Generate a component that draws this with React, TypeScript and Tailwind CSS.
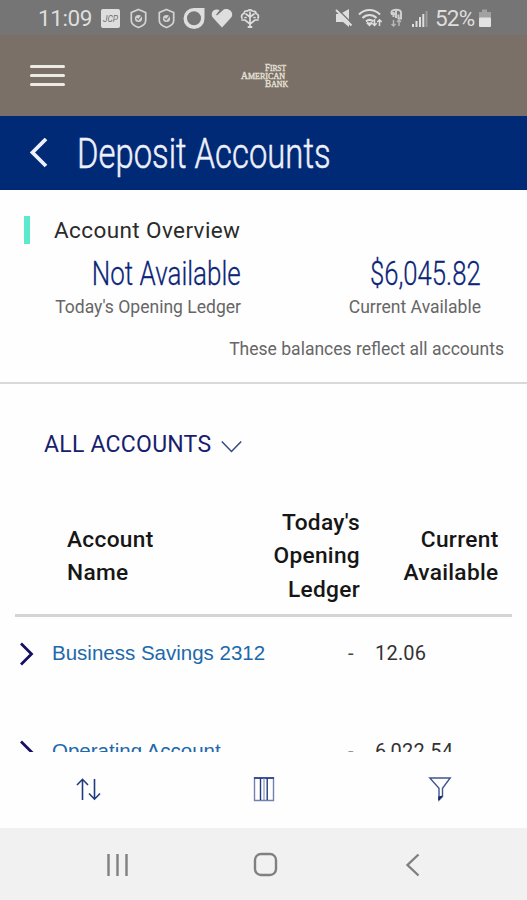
import React from "react";

function StatusBar() {
  return (
    <div className="flex h-[35px] shrink-0 items-center bg-[#757575] pl-[38px] text-[#dedede]">
      <span className="w-[62px] whitespace-nowrap pt-[2px] text-[22.5px] leading-[35px] tracking-[-0.4px]">11:09</span>
      <svg className="h-[35px] w-[170px]" viewBox="100 0 170 35" fill="none">
        <rect x="101" y="9" width="19" height="19" rx="2" fill="#dedede" />
        <text x="103" y="21.500" fontSize="9" fontStyle="italic" fill="#6e6e6e" textLength="15" lengthAdjust="spacingAndGlyphs">JCP</text>
        {[138.500, 166.500].map((x) => (
          <g key={x} transform={`translate(${x} 18.500)`} stroke="#d4d4d4">
            <path d="M0-9 7.200-6V2C7.200 5.500 3 8 0 9-3 8-7.200 5.500-7.200 2V-6Z" strokeWidth="1.700" />
            <circle r="3.600" fill="#d4d4d4" stroke="none" />
            <path d="m-2-.3 1.700 1.700 3.200-3.700" stroke="#757575" strokeWidth="1.200" />
          </g>
        ))}
        <path fillRule="evenodd" d="M194 8h10.500v10.500a10.500 10.500 0 1 1-10.500-10.500Zm0 3.200a7 7 0 1 0 0 14 7 7 0 0 0 0-14Z" fill="#dedede" />
        <path d="m222 27.500-9-9.700c-3-3.500-.5-8.300 3.500-8.300 1.500 0 2.300.4 3 1l-3.300 4 .7.900 5.500-4.700c4-3.700 9.800-.3 9.800 3.800 0 1.600-.8 2.800-1.700 3.800Z" fill="#dedede" />
        <g stroke="#dedede" strokeLinecap="round">
          <path d="M250 27V12M250 24l-5-4h-3M250 24l5-4h3M250 17l-4-3M250 17l4-3" strokeWidth="1.700" />
          <path d="M242 18c-1-2 0-4 2-4.500 0-2 2-3 3.500-2.500 1.500-1.500 4-1.500 5 0 2 0 3.500 1 3.500 2.500 2 .5 3 2.500 2 4.500M245 17.500h1M254 17.500h1" strokeWidth="1.700" />
          <path d="M248.500 27h3" strokeWidth="2" />
        </g>
      </svg>
      <svg className="ml-[64px] h-[35px] w-[98px]" viewBox="334 0 98 35" fill="none">
        <path d="M336 14h4l9-5v18l-6-5h-7Z" fill="#dedede" />
        <path d="m337 8.500 16 16" stroke="#757575" strokeWidth="1.500" />
        <path d="m336 10 15.500 15.500" stroke="#dedede" strokeWidth="2" />
        <g stroke="#dedede" strokeWidth="2.100">
          <path d="M359 14.500c6-6 15-6 21 0M362.500 18c4-4 10-4 14 0M366 21.500c2-2 5-2 7.500 0" />
          <path d="m367 22.500 2.500 2.500 2.500-2.500" fill="#dedede" />
          <path d="M374.500 19v6M372.300 23.300l2.200 2.200 2.200-2.200M379.500 26v-6M377.300 22l2.200-2.200 2.200 2.200" strokeWidth="1.500" />
        </g>
        <path d="M391.500 14v-2c0-3 9.500-3 9.500.5v6h-2.500v-4M391 14h6M393.500 12v5M396 10v8" stroke="#cfcfcf" strokeWidth="2" />
        <path d="M393.500 20v6M391.500 24l2 2 2-2M399 26v-6M397 22l2-2 2 2" stroke="#b5b5b5" strokeWidth="1.500" />
        <g fill="#dedede">
          <rect x="412" y="24" width="2" height="3" />
          <rect x="415.500" y="21" width="2" height="6" />
          <rect x="419" y="17" width="2" height="10" />
          <rect x="422.300" y="14" width="2" height="13" />
          <rect x="425.500" y="11" width="2" height="16" fill="#999" />
        </g>
      </svg>
      <span className="ml-[3px] w-[43px] whitespace-nowrap pt-[2px] text-[22.5px] leading-[35px] tracking-[-0.8px]">52%</span>
      <svg className="h-[35px] w-[14px]" viewBox="478 0 14 35">
        <path d="M479 12h3V9.500h5V12h4v6h-12Z" fill="#a2a2a2" />
        <rect x="479" y="17.500" width="12" height="9.500" rx="1" fill="#e2e2e2" />
      </svg>
    </div>
  );
}

function BrandHeader() {
  return (
    <header className="flex h-[80.5px] shrink-0 items-center bg-[#7a7067] pl-[30px]">
      <button aria-label="Menu" className="flex w-[35px] flex-col gap-[5.5px]">
        <span className="h-[3.5px] rounded-sm bg-[#eeebe4]" />
        <span className="h-[3.5px] rounded-sm bg-[#eeebe4]" />
        <span className="h-[3.5px] rounded-sm bg-[#eeebe4]" />
      </button>
      <svg className="ml-[175px] h-[28px] w-[50px]" viewBox="240 60 50 28" fill="#e6e1d8" stroke="#e6e1d8" strokeWidth=".35" fontFamily="Liberation Serif, serif">
        <text x="265" y="70" fontSize="9.500" textLength="21" lengthAdjust="spacingAndGlyphs">F<tspan fontSize="8">IRST</tspan></text>
        <text x="241" y="78" fontSize="9.500" textLength="44" lengthAdjust="spacingAndGlyphs">A<tspan fontSize="8">MERICAN</tspan></text>
        <text x="265" y="86" fontSize="9.500" textLength="23" lengthAdjust="spacingAndGlyphs">B<tspan fontSize="8">ANK</tspan></text>
      </svg>
    </header>
  );
}

function TitleBar() {
  return (
    <div className="flex h-[74.5px] shrink-0 items-center bg-[#002a76] pl-[29px] text-[#eef0fa]">
      <svg className="h-[30px] w-[20px]" viewBox="0 0 20 30" fill="none" stroke="currentColor" strokeWidth="3.800">
        <path d="M17 1 3.500 14.500 17 28" />
      </svg>
      <h1 className="ml-[28px] origin-left scale-x-[0.763] whitespace-nowrap text-[43px] leading-[74px] font-light [-webkit-text-stroke:0.5px]">Deposit Accounts</h1>
    </div>
  );
}

function Overview() {
  return (
    <section className="h-[194px] shrink-0 border-b-2 border-[#d9d9d9] pt-[26px]">
      <div className="flex h-[28px] items-center pl-[24px]">
        <span className="h-[28px] w-[6px] bg-[#5beacb]" />
        <h2 className="ml-[24px] whitespace-nowrap text-[22.5px] leading-[28px] tracking-[0.4px] text-[#2b2b2b]">Account Overview</h2>
      </div>
      <div className="flex h-[74px]">
        <div className="flex w-[241px] flex-col items-end">
          <span className="mt-[8px] h-[43px] origin-right scale-x-[0.765] whitespace-nowrap text-[34px] leading-[42px] font-light text-[#0b2478] [-webkit-text-stroke:0.3px]">Not Available</span>
          <span className="whitespace-nowrap text-[17.55px] leading-[26px] text-[#666]">Today's Opening Ledger</span>
        </div>
        <div className="flex w-[240px] flex-col items-end">
          <span className="mt-[8px] h-[43px] origin-right scale-x-[0.755] whitespace-nowrap text-[34px] leading-[42px] font-light text-[#0b2478] [-webkit-text-stroke:0.3px]">$6,045.82</span>
          <span className="whitespace-nowrap text-[17.55px] leading-[26px] text-[#666]">Current Available</span>
        </div>
      </div>
      <p className="mt-[18px] pr-[23px] text-right text-[17.55px] leading-[26px] text-[#666]">These balances reflect all accounts</p>
    </section>
  );
}

function AccountRow({ name, value }: { name: string; value: string }) {
  return (
    <div className="flex h-[98px] shrink-0 items-start">
      <svg className="ml-[19px] mt-[8px] h-[24px] w-[16px]" viewBox="0 0 16 24" fill="none" stroke="#17105e" strokeWidth="2.800">
        <path d="M2 1.500 12.500 12 2 22.500" />
      </svg>
      <span className="ml-[17px] w-[296px] whitespace-nowrap font-['Liberation_Sans',sans-serif] text-[20.5px] leading-[38px] text-[#2168ab]">{name}</span>
      <span className="w-[27px] text-[20px] leading-[38px] text-[#444]">-</span>
      <span className="text-[20px] leading-[38px] tracking-[0.2px] text-[#333]">{value}</span>
    </div>
  );
}

export default function App() {
  return (
    <div className="flex h-[900px] w-[527px] flex-col overflow-hidden bg-[#fefefe] font-[Roboto,sans-serif]">
      <StatusBar />
      <BrandHeader />
      <TitleBar />
      <Overview />
      <div className="flex h-[120px] shrink-0 items-center pl-[44px] text-[#17206e]">
        <span className="w-[177px] whitespace-nowrap pt-[2px] text-[23px] leading-[30px] tracking-[0.25px]">ALL ACCOUNTS</span>
        <svg className="mt-[5px] h-[14px] w-[21px]" viewBox="0 0 21 14" fill="none" stroke="#344685" strokeWidth="1.500">
          <path d="m.8 1.500 9.700 10 9.700-10" />
        </svg>
      </div>
      <div className="mx-[15px] flex h-[113px] shrink-0 items-center border-b-[3px] border-[#d4d4d4] pb-[6px] text-[22.7px] leading-[33.5px] font-medium tracking-[0.3px] text-[#161616]">
        <div className="w-[180px] pl-[52px]">Account<br />Name</div>
        <div className="w-[165px] text-right">Today's<br />Opening<br />Ledger</div>
        <div className="w-[138.5px] text-right">Current<br />Available</div>
      </div>
      <main className="flex h-[135px] shrink-0 flex-col overflow-hidden pt-[17px]">
        <AccountRow name="Business Savings 2312" value="12.06" />
        <AccountRow name="Operating Account" value="6,022.54" />
      </main>
      <div className="flex h-[76px] shrink-0 items-start pl-[76px] pt-[24px] text-[#203a80]">
        <svg className="h-[26px] w-[26px]" viewBox="76 776 26 26" fill="none" stroke="currentColor" strokeWidth="1.600">
          <path d="M82.500 800V779.500M77 785l5.500-5.700L88 785M94.500 779v20M89 793.500l5.500 5.700 5.500-5.700" />
        </svg>
        <svg className="ml-[150px] h-[26px] w-[24px]" viewBox="252 776 24 26" fill="none" stroke="currentColor" strokeWidth="1.400">
          <path d="M254.500 778h19v22.500h-19Z" stroke="#7282ad" />
          <path d="M254 778h20M260.500 778v22M267.200 778v22" />
          <path d="M264 778v22" stroke="#7282ad" strokeWidth="1" />
        </svg>
        <svg className="ml-[152px] h-[26px] w-[26px]" viewBox="428 776 26 26" fill="none" stroke="#40558f" strokeWidth="1.400">
          <path d="M429.800 778h20.400l-7.700 10.300v8.200l-3.500 3.500v-11.700Z" />
          <path d="M439 800v-3l3-.5" fill="#15266f" stroke="#15266f" />
        </svg>
      </div>
      <nav className="flex flex-1 items-center bg-[#f1f1f1] pl-[107px] pt-[1px] text-[#808080]">
        <svg className="h-[24px] w-[22px]" viewBox="0 0 22 24" stroke="currentColor" strokeWidth="2.400">
          <path d="M1.500 1v22M10.500 1v22M19.500 1v22" />
        </svg>
        <svg className="ml-[124px] h-[26px] w-[26px]" viewBox="0 0 26 26" fill="none" stroke="currentColor" strokeWidth="2.400">
          <rect x="2" y="2" width="21" height="21" rx="6" />
        </svg>
        <svg className="ml-[126px] h-[24px] w-[16px]" viewBox="0 0 16 24" fill="none" stroke="currentColor" strokeWidth="2.400">
          <path d="M13.500 1.500 2.500 12l11 10.500" />
        </svg>
      </nav>
    </div>
  );
}
